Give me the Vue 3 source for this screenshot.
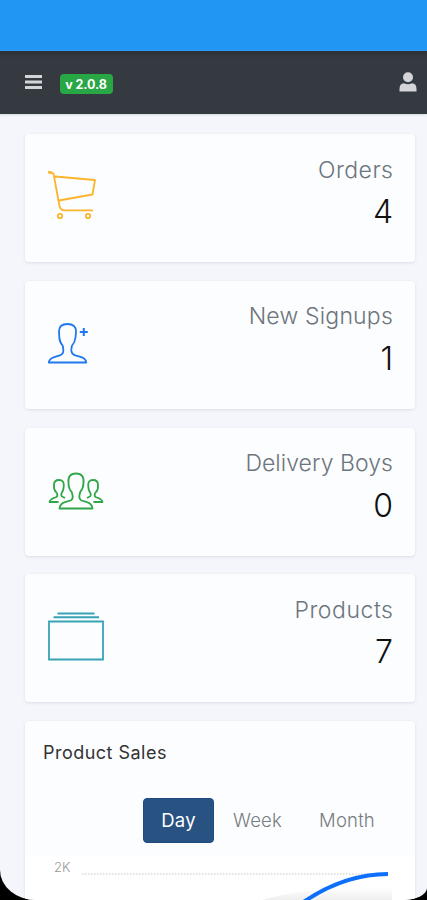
<script setup>
const cards = [
  { label: 'Orders', value: 4, icon: 'cart', color: '#fbb52b' },
  { label: 'New Signups', value: 1, icon: 'person', color: '#1f78ee' },
  { label: 'Delivery Boys', value: 0, icon: 'people', color: '#2fa647' },
  { label: 'Products', value: 7, icon: 'albums', color: '#36a3b5' },
]
const slug = (s) => s.toLowerCase().replace(' ', '-')
</script>

<template>
  <div class="device">
    <div class="screen">
      <div class="status"></div>
      <header class="navbar">
        <svg class="menu" width="17" height="16" viewBox="0 0 17 16">
          <path d="M0 2.5H17M0 8H17M0 13.5H17" stroke="#d3d5d7" stroke-width="3" />
        </svg>
        <span class="badge"><span class="version">v 2.0.8</span></span>
        <svg class="user" width="18" height="20" viewBox="0 0 18 20">
          <circle cx="9" cy="5.2" r="5" fill="#d3d5d8" />
          <path d="M.5 19.5V17Q.5 11.6 5 11.3Q9 13.2 13 11.3Q17.5 11.6 17.5 17V19.5Z" fill="#d3d5d8" />
        </svg>
      </header>
      <main class="content">
        <section v-for="c in cards" :key="c.label" class="card stat">
          <svg class="icon" width="58" height="56" viewBox="0 0 58 56" fill="none" :stroke="c.color" stroke-width="1.8" stroke-linejoin="round">
            <g v-if="c.icon === 'cart'">
              <path d="M0 6L5.5 7.5L11.5 40Q12.5 44.3 16.5 44.3H45M7 10.5L47 14L44.5 28.5L11 34.5" />
              <path d="M0 6L4.5 7" stroke-width="2.6" />
              <circle cx="12" cy="50" r="2.2" /><circle cx="40" cy="50" r="2.2" />
            </g>
            <g v-else-if="c.icon === 'person'">
              <path d="M.8 49.5Q1.3 45.8 6.3 44.2L11.8 42.4Q15.8 40.8 15.3 36.5L14.8 33Q11.3 28.8 11.3 24L11 18Q11.3 11 19.3 11Q28.3 11 28 19L27.5 24.5Q27.1 29 23.8 33L23.3 37Q23.3 41 27.3 42.4L33.3 44.2Q37.8 45.8 38.3 49.5Z" />
              <path d="M35.8 15V23M31.8 19H39.8" stroke-width="2" />
            </g>
            <g v-else-if="c.icon === 'people'">
              <path d="M11.5 48.5Q12.2 43.5 17 42.2L22.5 40.5Q25.5 39 24.5 35L23.7 32Q20.5 28.5 20.5 23Q19.5 13.5 28 13.5Q36.5 13.5 35.5 23Q35.3 28.5 32.2 32L31.5 35Q30.8 39 33.5 40.5L39 42.2Q43.8 43.5 44.5 48.5Z" />
              <path d="M10.5 42H1.5Q2 38.8 8.5 37Q10.5 35 8 32Q5.5 29.5 6 25Q6 20 11 20Q16.3 20 15.8 26Q15.7 30 14 32.5Q12 35.5 15 37L17 38" />
              <path d="M45.5 42H54.5Q54 38.8 47.5 37Q45.5 35 48 32Q50.5 29.5 50 25Q50 20 45 20Q39.7 20 40.2 26Q40.3 30 42 32.5Q44 35.5 41 37L39 38" />
            </g>
            <g v-else>
              <path d="M1 15.5H55V53.5H1Z" stroke-linejoin="miter" />
              <path d="M9.5 7.5H46.5M5.5 11.3H51" stroke-width="2" />
            </g>
          </svg>
          <div class="figures">
            <div class="label" :class="slug(c.label)">{{ c.label }}</div>
            <div class="value">{{ c.value }}</div>
          </div>
        </section>
        <section class="card sales">
          <h2 class="title">Product Sales</h2>
          <nav class="tabs">
            <button class="tab day active">Day</button>
            <button class="tab week">Week</button>
            <button class="tab month">Month</button>
          </nav>
          <div class="chart">
            <span class="axis">2K</span>
            <svg class="plot" width="310" height="38" viewBox="0 0 310 38">
              <defs>
                <linearGradient id="area" x1="0" y1="0" x2="0" y2="1">
                  <stop offset="0" stop-color="#fff" /><stop offset="1" stop-color="#eeeeee" />
                </linearGradient>
              </defs>
              <path d="M180 38Q215 28 260 26H310V38Z" fill="url(#area)" />
              <path d="M0 12H306" stroke="#e2e2e2" stroke-width="2" stroke-dasharray="1.5 1.5" />
              <path d="M220 41Q262 12 306 12" fill="none" stroke="#0e6ffb" stroke-width="4" />
            </svg>
          </div>
        </section>
      </main>
    </div>
  </div>
</template>

<style>
body { background: #000; overflow: hidden; }
</style>
<style scoped>
* { box-sizing: border-box; }
.device { width: 427px; height: 900px; background: #000; font-family: Inter, "Open Sans", sans-serif; font-weight: 300; }
.screen { width: 427px; height: 900px; overflow: hidden; background: #f4f6fb; border-radius: 0 0 24px 36px / 0 0 12px 30px; }
.status { height: 51px; background: #2196f3; }
.navbar { height: 63px; background: linear-gradient(#2c3136, #343a40 7px); display: flex; align-items: center; padding: 1px 10px 0 25px; box-shadow: 0 1px 2px #d5d8dc; }
.menu { margin-top: -2px; }
.badge { width: 53px; height: 20px; margin: 2px auto 0 17.5px; border-radius: 4px; background: #28a745; color: #fff; display: flex; align-items: center; justify-content: center; font-weight: 700; font-size: 12.5px; }
.version { letter-spacing: -0.1px; white-space: nowrap; }
.user { margin-top: -2px; }
.content { padding: 20.2px 12px 0 25px; display: flex; flex-direction: column; gap: 18.7px; }
.card { background: #fcfdfe; border-radius: 4px; box-shadow: 0 1px 3px rgba(40, 50, 70, .12); flex: none; }
.stat { height: 128px; display: flex; justify-content: space-between; padding: 21.6px 22px 0 23px; }
.icon { margin-top: 10.4px; }
.figures { text-align: right; }
.label { color: #6c757d; font-size: 23px; line-height: 29px; white-space: nowrap; }
.orders { letter-spacing: .45px; margin-right: -.45px; }
.new-signups { letter-spacing: .2px; }
.delivery-boys { letter-spacing: .05px; }
.products { letter-spacing: .55px; margin-right: -.55px; }
.value { color: #101010; font-size: 32px; line-height: 40px; margin-top: 7.4px; }
.sales { height: 200px; padding: 19px 22px 0 18px; background: linear-gradient(#fcfdfe 135px, #fff 135px); }
.title { margin: 0; font-size: 18px; font-weight: 400; line-height: 26px; color: #333; letter-spacing: .48px; }
.tabs { display: flex; justify-content: flex-end; margin-top: 32px; }
.tab { height: 45px; border: 0; border-radius: 4px; background: none; color: #777c81; font: inherit; font-size: 18.5px; padding: 0; letter-spacing: .2px; }
.day { width: 71px; }
.week { width: 87px; }
.month { width: 92px; }
.tab.active { background: #275282; color: #fff; font-weight: 400; border: 1px solid #1d4b82; }
.chart { display: flex; margin-top: 19px; padding-left: 11px; }
.axis { width: 28px; font-size: 13px; line-height: 14px; color: #999; margin-top: -2px; }
.plot { flex: none; }
</style>
